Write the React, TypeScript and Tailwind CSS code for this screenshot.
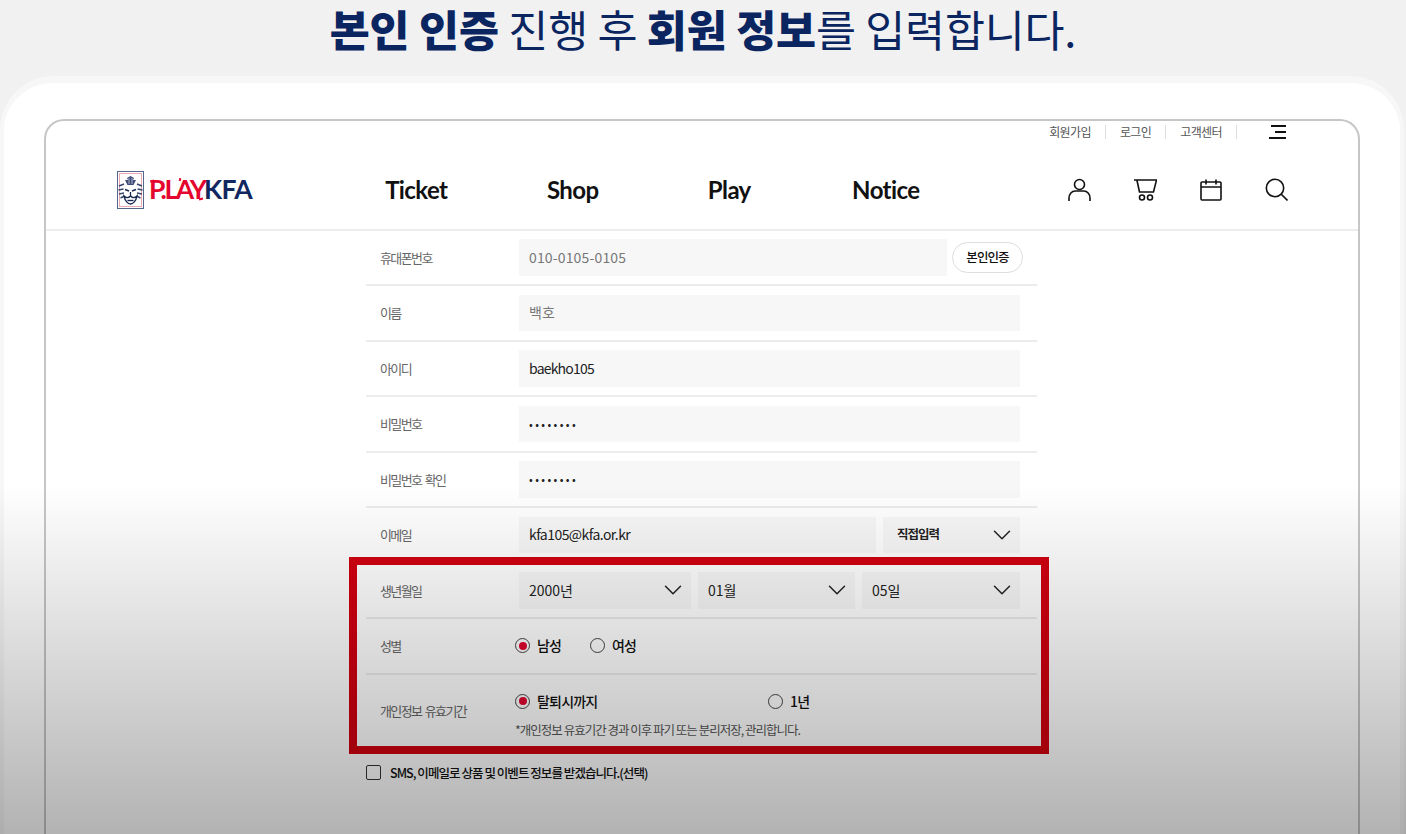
import { ChevronDown } from "lucide-react";

const KR = "font-['Noto_Sans_CJK_KR','Noto_Sans',sans-serif]";

function Tiger() {
  return (
    <svg width="27" height="38" viewBox="0 0 27 38" fill="none">
      <rect x="0.5" y="0.5" width="26" height="37" fill="#fff" stroke="#56658a" />
      <rect x="2.500" y="2.500" width="22" height="33" stroke="#eba9b4" strokeWidth="1" />
      <path d="M13.500 5l3.500 2-1 2 3 0-2.500 5h-6l-2.500-5 3 0-1-2z" fill="#3d4c78" />
      <path d="M12 7v6M15 7v6" stroke="#fff" strokeWidth="0.6" />
      <path d="M2 15l5-2M1.500 19l5-1M2 23l5-1M3.500 27l4-2M25 15l-5-2M25.500 19l-5-1M25 23l-5-1M23.500 27l-4-2" stroke="#37466f" strokeWidth="1.400" />
      <path d="M8 18.500l4 1.500M19 18.500l-4 1.500" stroke="#16264f" strokeWidth="1.400" />
      <path d="M13.500 21v4M7 25c1 5 4 8 6.500 8s5.500-3 6.500-8c-2 2-4.500 2-6.500 0-2 2-4.500 2-6.500 0z" stroke="#16264f" strokeWidth="1.300" />
      <path d="M10.500 29.500h6" stroke="#16264f" strokeWidth="1.400" />
    </svg>
  );
}

function Logo() {
  return (
    <div className="relative flex w-[221px] items-center">
      <Tiger />
      <span className="ml-[5px] w-[55px] font-['Lato',sans-serif] text-[26.500px] font-bold leading-none tracking-[-2.400px] text-[#e4062d]">P.LAY</span>
      <span className="font-['Lato',sans-serif] text-[26.500px] font-bold leading-none tracking-[-0.7px] text-[#12275f]">KFA</span>
      {/* confetti ticks around the wordmark */}
      <i className="absolute left-[33px] top-[9px] h-[1.500px] w-[4px] -rotate-12 bg-[#e4062d]" />
      <i className="absolute left-[62px] top-[7px] h-[3px] w-[1.500px] rotate-12 bg-[#e4062d]" />
      <i className="absolute left-[82px] top-[27px] h-[1.500px] w-[4px] -rotate-12 bg-[#e4062d]" />
    </div>
  );
}

function NavIcons() {
  return (
    <div className="flex items-center gap-[43px] text-[#111]">
      <svg width="23" height="24" viewBox="0 0 23 24" fill="none" stroke="currentColor" strokeWidth="1.600">
        <circle cx="11.500" cy="6.500" r="5" />
        <path d="M1 23v-3c0-4 3-7 6-7h9c3 0 6 3 6 7v3" />
      </svg>
      <svg width="23" height="24" viewBox="0 0 23 24" fill="none" stroke="currentColor" strokeWidth="1.600">
        <path d="M0 2h22.500l-3 12h-14l-2.500-11.500" />
        <circle cx="8" cy="19.500" r="2.500" />
        <circle cx="16" cy="19.500" r="2.500" />
      </svg>
      <svg width="22" height="22" viewBox="0 0 22 22" fill="none" stroke="currentColor" strokeWidth="1.600">
        <rect x="1" y="3" width="20" height="18" rx="1" />
        <path d="M1 8h20M6 0.500v5M16 0.500v5" />
      </svg>
      <svg width="23" height="23" viewBox="0 0 23 23" fill="none" stroke="currentColor" strokeWidth="1.600">
        <circle cx="10" cy="10" r="8.700" />
        <path d="M16 16l6.500 6.500" />
      </svg>
    </div>
  );
}

function Row({ label, children }: { label: string; children: React.ReactNode }) {
  return (
    <div className="flex h-[55.500px] items-center border-b-2 border-[#ececec] pl-[14px]">
      <span className="w-[139px] shrink-0 text-[13px] tracking-[-1.600px] text-[#666] [word-spacing:2px]">{label}</span>
      {children}
    </div>
  );
}

function Field({ text, color = "text-[#222]", w = "w-[501px]", extra = "text-[14px]" }: { text: string; color?: string; w?: string; extra?: string }) {
  return (
    <div className={`flex h-[36.500px] items-center bg-[#f7f7f7] px-[10px] ${extra} ${color} ${w}`}>{text}</div>
  );
}

function Select({ text, w, bold }: { text: string; w: string; bold?: boolean }) {
  return (
    <div className={`flex h-[36.500px] items-center justify-between bg-[#f7f7f7] pl-[10px] pr-[3px] text-[#222] ${w}`}>
      <span className={bold ? "pl-[4px] text-[12.500px] font-bold tracking-[-1px]" : "text-[14px]"}>{text}</span>
      <ChevronDown size={30} strokeWidth={1.200} />
    </div>
  );
}

function Radio({ label, on, w }: { label: string; on?: boolean; w: string }) {
  return (
    <div className={`flex items-center gap-[7px] ${w}`}>
      <span className="flex size-[15px] items-center justify-center rounded-full border border-[#444] bg-white">
        {on && <span className="size-[8px] rounded-full bg-[#e0062f]" />}
      </span>
      <span className="text-[14px] font-medium tracking-[-0.8px] text-[#111]">{label}</span>
    </div>
  );
}

export default function App() {
  return (
    <div className={`relative h-[834px] w-[1406px] overflow-hidden bg-[#f1f1f2] ${KR}`}>
      <h1 className="flex h-[76px] justify-center text-[43.500px] font-normal leading-[57px] tracking-[-0.2px] text-[#0a2560]">
        <span className="inline-block whitespace-pre"><b className="inline-block font-black">본인 인증</b> 진행 후 <b className="inline-block font-black">회원 정보</b>를 입력합니다.</span>
      </h1>

      <div className="h-[800px] w-[1404px] rounded-t-[54px] border-x-4 border-t-[7px] border-[#f7f7f7] bg-white px-[40px] pt-[36px]">
        <div className="h-[800px] rounded-t-[20px] border-2 border-b-0 border-[#c6c6c6]">
          <header className="h-[109.500px] border-b-2 border-[#ececec]">
            <div className="flex h-[22px] items-center justify-end pr-[72px] text-[12px] tracking-[-0.6px] text-[#555]">
              <span>회원가입</span>
              <i className="mx-[14px] h-[14px] w-px bg-[#ddd]" />
              <span>로그인</span>
              <i className="mx-[14px] h-[14px] w-px bg-[#ddd]" />
              <span>고객센터</span>
              <i className="ml-[14px] mr-[32px] h-[14px] w-px bg-[#ddd]" />
              <div className="flex w-[17px] flex-col items-end gap-[4px]">
                <i className="h-[2px] w-[15px] bg-[#111]" />
                <i className="h-[2px] w-[11px] bg-[#111]" />
                <i className="h-[2px] w-[17px] bg-[#111]" />
              </div>
            </div>
            <div className="flex h-[86px] items-center pl-[71px] pr-[70px] pt-[7px]">
              <Logo />
              <nav className="grid w-[626px] grid-cols-4 text-center font-['Lato',sans-serif] text-[24px] font-bold leading-none tracking-[-0.6px] text-[#111]">
                <span>Ticket</span>
                <span>Shop</span>
                <span>Play</span>
                <span>Notice</span>
              </nav>
              <div className="ml-auto">
                <NavIcons />
              </div>
            </div>
          </header>

          <form className="ml-[320px] w-[671px]">
            <Row label="휴대폰번호">
              <Field text="010-0105-0105" color="text-[#777]" w="w-[428px]" extra="text-[14px] tracking-[0.15px]" />
              <span className="ml-[5px] flex h-[31px] w-[71px] items-center justify-center rounded-full border border-[#ddd] text-[12.500px] font-medium tracking-[-0.9px] text-[#111]">본인인증</span>
            </Row>
            <Row label="이름"><Field text="백호" color="text-[#777]" /></Row>
            <Row label="아이디"><Field text="baekho105" extra="text-[14px] tracking-[-0.8px]" /></Row>
            <Row label="비밀번호"><Field text="••••••••" extra="text-[11px] tracking-[2.400px]" /></Row>
            <Row label="비밀번호 확인"><Field text="••••••••" extra="text-[11px] tracking-[2.400px]" /></Row>
            <Row label="이메일">
              <Field text="kfa105@kfa.or.kr" w="w-[357px]" extra="text-[14px] tracking-[-0.55px]" />
              <div className="ml-[7px]"><Select text="직접입력" w="w-[137px]" bold /></div>
            </Row>
            <Row label="생년월일">
              <Select text="2000년" w="w-[172px]" />
              <div className="ml-[7px]"><Select text="01월" w="w-[157px]" /></div>
              <div className="ml-[7px]"><Select text="05일" w="w-[158px]" /></div>
            </Row>
            <Row label="성별">
              <div className="-ml-[4px] flex">
                <Radio label="남성" on w="w-[75px]" />
                <Radio label="여성" w="w-[80px]" />
              </div>
            </Row>
            <div className="flex h-[78px] pl-[14px]">
              <span className="w-[139px] shrink-0 pt-[26px] text-[13px] tracking-[-1.600px] text-[#666] [word-spacing:2px]">개인정보 유효기간</span>
              <div className="-ml-[4px] pt-[16px]">
                <div className="flex">
                  <Radio label="탈퇴시까지" on w="w-[253px]" />
                  <Radio label="1년" w="w-[60px]" />
                </div>
                <p className="mt-[9px] text-[12.500px] tracking-[-1px] text-[#555]">*개인정보 유효기간 경과 이후 파기 또는 분리저장, 관리합니다.</p>
              </div>
            </div>
            <div className="mt-[11px] flex items-center gap-[9px]">
              <span className="size-[15px] rounded-[2px] border border-[#333] bg-white" />
              <span className="text-[12.500px] font-medium tracking-[-0.95px] text-[#111]">SMS, 이메일로 상품 및 이벤트 정보를 받겠습니다.(선택)</span>
            </div>
          </form>
        </div>
      </div>

      {/* highlight box over the birth date / gender / retention rows */}
      <div className="pointer-events-none absolute left-[349px] top-[557px] h-[197px] w-[700px] border-[8px] border-[#d20010]" />
      {/* video style fade to grey towards the bottom */}
      <div className="pointer-events-none absolute inset-x-0 bottom-0 h-[350px] bg-gradient-to-b from-transparent to-black/30" />
    </div>
  );
}
